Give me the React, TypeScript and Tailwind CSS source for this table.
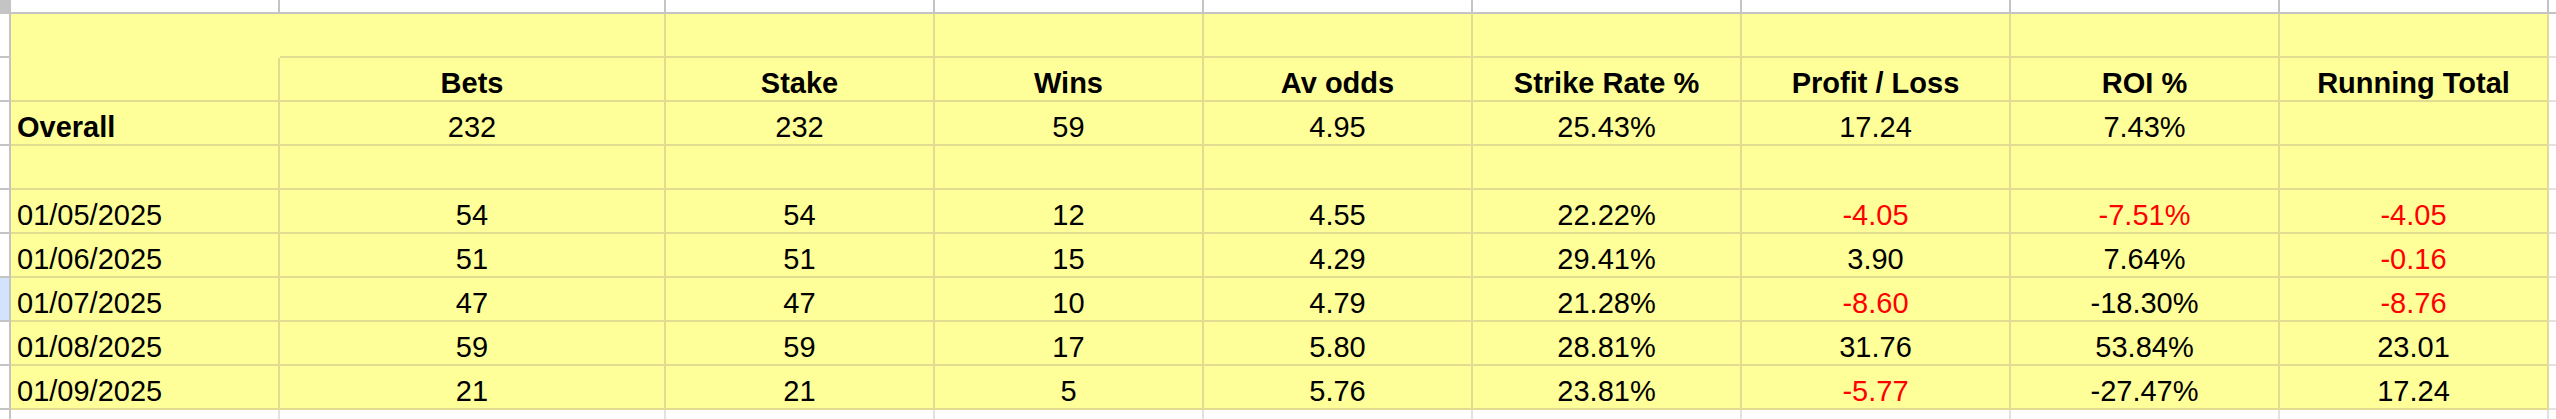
const COLS = ['Bets', 'Stake', 'Wins', 'Av odds', 'Strike Rate %', 'Profit / Loss', 'ROI %', 'Running Total']

type Cell = { v: string; red?: boolean }

const OVERALL: Cell[] = [
  { v: '232' }, { v: '232' }, { v: '59' }, { v: '4.95' }, { v: '25.43%' }, { v: '17.24' }, { v: '7.43%' }, { v: '' },
]

const MONTHS: { date: string; cells: Cell[] }[] = [
  {
    date: '01/05/2025',
    cells: [{ v: '54' }, { v: '54' }, { v: '12' }, { v: '4.55' }, { v: '22.22%' }, { v: '-4.05', red: true }, { v: '-7.51%', red: true }, { v: '-4.05', red: true }],
  },
  {
    date: '01/06/2025',
    cells: [{ v: '51' }, { v: '51' }, { v: '15' }, { v: '4.29' }, { v: '29.41%' }, { v: '3.90' }, { v: '7.64%' }, { v: '-0.16', red: true }],
  },
  {
    date: '01/07/2025',
    cells: [{ v: '47' }, { v: '47' }, { v: '10' }, { v: '4.79' }, { v: '21.28%' }, { v: '-8.60', red: true }, { v: '-18.30%' }, { v: '-8.76', red: true }],
  },
  {
    date: '01/08/2025',
    cells: [{ v: '59' }, { v: '59' }, { v: '17' }, { v: '5.80' }, { v: '28.81%' }, { v: '31.76' }, { v: '53.84%' }, { v: '23.01' }],
  },
  {
    date: '01/09/2025',
    cells: [{ v: '21' }, { v: '21' }, { v: '5' }, { v: '5.76' }, { v: '23.81%' }, { v: '-5.77', red: true }, { v: '-27.47%' }, { v: '17.24' }],
  },
]

// widths incl. the 2px right gridline
const widthOf = (i: number) => (i === 0 ? 'w-[386px]' : 'w-[269px]')

function Gutter({ selected = false }: { selected?: boolean }) {
  return (
    <div
      className={[
        'h-full w-[11px] shrink-0 border-b-2 border-r-2 border-[#c4c4c4]',
        selected ? 'bg-[#d3e3fd]' : 'bg-white',
      ].join(' ')}
    />
  )
}

function Tail() {
  return <div className="h-full w-[7px] shrink-0 border-b-2 border-[#e2e2e2] bg-white" />
}

function Row({ label, bold, cells, selected }: { label: string; bold?: boolean; cells: Cell[]; selected?: boolean }) {
  return (
    <div className="flex h-[44px]">
      <Gutter selected={selected} />
      <div className="flex w-[269px] shrink-0 items-end border-b-2 border-r-2 border-[#e1dc92] bg-[#ffff99] pb-[2px] pl-[6px]">
        <span className={['leading-none', bold ? 'font-bold' : ''].join(' ')}>{label}</span>
      </div>
      {cells.map((c, i) => (
        <div
          key={i}
          className={`flex ${widthOf(i)} shrink-0 items-end justify-center border-b-2 border-r-2 border-[#e1dc92] bg-[#ffff99] pb-[2px]`}
        >
          <span className={['leading-none', c.red ? 'text-[#ff0000]' : 'text-black'].join(' ')}>{c.v}</span>
        </div>
      ))}
      <Tail />
    </div>
  )
}

export default function App() {
  return (
    <div className="h-[419px] w-[2556px] overflow-hidden bg-white font-['Liberation_Sans',Arial,sans-serif] text-[29px] text-black">
      {/* column header strip (cut off) */}
      <div className="flex h-[14px]">
        <div className="h-full w-[11px] shrink-0 border-b-2 border-r-2 border-[#c4c4c4] bg-[#c4c4c4]" />
        <div className="h-full w-[269px] shrink-0 border-b-2 border-r-2 border-[#c4c4c4] bg-white" />
        {COLS.map((c, i) => (
          <div key={c} className={`h-full ${widthOf(i)} shrink-0 border-b-2 border-r-2 border-[#c4c4c4] bg-white`} />
        ))}
        <div className="h-full w-[7px] shrink-0 border-b-2 border-[#c4c4c4] bg-white" />
      </div>

      {/* row 1: blank, A merged into the header block */}
      <div className="flex h-[44px]">
        <Gutter />
        <div className="w-[269px] shrink-0 bg-[#ffff99]" />
        {COLS.map((c, i) => (
          <div key={c} className={`${widthOf(i)} shrink-0 border-b-2 border-r-2 border-[#e1dc92] bg-[#ffff99]`} />
        ))}
        <Tail />
      </div>

      {/* row 2: headings */}
      <div className="flex h-[44px]">
        <Gutter />
        <div className="w-[269px] shrink-0 border-b-2 border-r-2 border-[#e1dc92] bg-[#ffff99]" />
        {COLS.map((c, i) => (
          <div
            key={c}
            className={`flex ${widthOf(i)} shrink-0 items-end justify-center border-b-2 border-r-2 border-[#e1dc92] bg-[#ffff99] pb-[2px]`}
          >
            <span className="font-bold leading-none">{c}</span>
          </div>
        ))}
        <Tail />
      </div>

      <Row label="Overall" bold cells={OVERALL} />
      <Row label="" cells={COLS.map(() => ({ v: '' }))} />

      {MONTHS.map((m, idx) => (
        <Row key={m.date} label={m.date} cells={m.cells} selected={idx === 2} />
      ))}

      {/* empty sheet below */}
      <div className="flex h-[9px]">
        <div className="h-full w-[11px] shrink-0 border-r-2 border-[#c4c4c4] bg-white" />
        <div className="h-full w-[269px] shrink-0 border-r-2 border-[#e2e2e2] bg-white" />
        {COLS.map((c, i) => (
          <div key={c} className={`h-full ${widthOf(i)} shrink-0 border-r-2 border-[#e2e2e2] bg-white`} />
        ))}
        <div className="h-full w-[7px] shrink-0 bg-white" />
      </div>
    </div>
  )
}
